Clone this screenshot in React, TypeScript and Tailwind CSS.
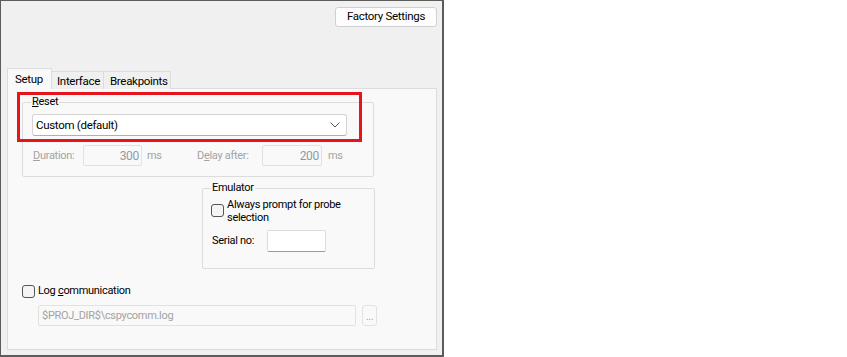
import React from 'react';

const font = { fontFamily: 'Roboto, "Liberation Sans", sans-serif' };

function GroupBox({ label, className, children }: { label: React.ReactNode; className: string; children?: React.ReactNode }) {
  return (
    <div className={`relative border border-[#dcdcdc] rounded-[2px] ${className}`}>
      <span className="absolute left-[8px] -top-[8px] bg-[#f9f9f9] px-[1px] leading-[14px] text-black">{label}</span>
      {children}
    </div>
  );
}

function Checkbox() {
  return <span className="block w-[13px] h-[13px] rounded-[3px] border border-[#555] bg-[#f5f5f5] shrink-0" />;
}

export default function App() {
  return (
    <div className="w-[847px] h-[357px] bg-white flex text-[11px] tracking-[-0.3px] leading-[14px]" style={font}>
      <div className="w-[444px] h-[357px] bg-[#f0f0f0] border-l border-t border-r-2 border-b-2 border-[#5c5c5c] flex flex-col">
        {/* top button */}
        <div className="flex justify-end pt-[6px] pr-[5px]">
          <button className="w-[102px] h-[20px] bg-[#fdfdfd] border border-[#d0d0d0] rounded-[3px] text-black leading-none text-[11.5px]">
            Factory Settings
          </button>
        </div>

        {/* tabs */}
        <div className="flex items-end ml-[6px] mt-[41px] h-[21px] relative z-10 text-[11.5px]">
          <div className="w-[45px] h-[21px] border border-b-0 border-[#dcdcdc] bg-[#f9f9f9] pl-[7px] pt-[3px] text-black">Setup</div>
          <div className="w-[52px] h-[18px] border border-l-0 border-b-0 border-[#dcdcdc] bg-[#f0f0f0] pl-[5px] pt-[2px] text-black">Interface</div>
          <div className="w-[67px] h-[18px] border border-l-0 border-b-0 border-[#dcdcdc] bg-[#f0f0f0] pl-[6px] pt-[2px] text-black">Breakpoints</div>
        </div>

        {/* panel */}
        <div className="relative ml-[6px] -mt-px w-[430px] h-[262px] border border-[#dcdcdc] bg-[#f9f9f9] flex flex-col">
          <GroupBox label={<><u>R</u>eset</>} className="ml-[14px] mt-[13px] w-[352px] h-[75px]">
            <div className="ml-[9px] mt-[11px] w-[315px] h-[22px] bg-white border border-[#d4d4d4] border-b-[#b0b0b0] rounded-[3px] flex items-center justify-between pl-[3px] pr-[6px] text-black text-[11.5px]">
              <span>Custom (default)</span>
              <svg width="10" height="6" viewBox="0 0 10 6" fill="none" stroke="#555" strokeWidth="1">
                <path d="M0.5 0.5 L5 5 L9.5 0.5" />
              </svg>
            </div>
            <div className="flex items-center mt-[9px] text-[#a3a3a3]">
              <span className="ml-[10px] w-[50px]"><u>D</u>uration:</span>
              <div className="w-[59px] h-[21px] border border-[#e2e2e2] rounded-[2px] flex items-center justify-end pr-[2px] text-[#8d99a8] text-[12px]">300</div>
              <span className="ml-[5px] w-[50px]">ms</span>
              <span className="w-[65px]">D<u>e</u>lay after:</span>
              <div className="w-[60px] h-[21px] border border-[#e2e2e2] rounded-[2px] flex items-center justify-end pr-[2px] text-[#8d99a8] text-[12px]">200</div>
              <span className="ml-[6px]">ms</span>
            </div>
          </GroupBox>

          <GroupBox label="Emulator" className="ml-[194px] mt-[11px] w-[173px] h-[81px]">
            <div className="flex items-start ml-[8px] mt-[15px]">
              <Checkbox />
              <span className="ml-[3px] -mt-[6px] leading-[13px] text-black">Always prompt for probe<br />selection</span>
            </div>
            <div className="flex items-center mt-[6px] ml-[9px] text-black">
              <span className="w-[55px]">Serial no:</span>
              <div className="w-[59px] h-[22px] bg-white border border-[#dcdcdc] border-b-[#9a9a9a] rounded-[2px]" />
            </div>
          </GroupBox>

          <div className="flex items-center h-[14px] ml-[14px] mt-[15px] text-black">
            <Checkbox />
            <span className="ml-[3px]">Log <u>c</u>ommunication</span>
          </div>

          <div className="flex items-center ml-[30px] mt-[7px]">
            <div className="w-[318px] h-[21px] border border-[#e2e2e2] rounded-[2px] flex items-center pl-[3px] text-[#a3a3a3]">$PROJ_DIR$\cspycomm.log</div>
            <div className="ml-[6px] w-[15px] h-[21px] border border-[#e2e2e2] rounded-[3px] flex items-end justify-center pb-[3px] text-[#a3a3a3] text-[10px] leading-none">...</div>
          </div>

          {/* red highlight annotation */}
          <div className="absolute left-[9px] top-[3px] w-[345px] h-[50px] border-[3px] border-[#e8141c] pointer-events-none" />
        </div>
      </div>
    </div>
  );
}
